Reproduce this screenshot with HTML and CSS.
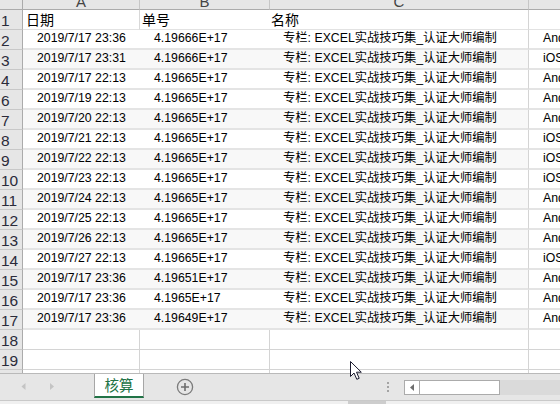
FILE: index.html
```html
<!DOCTYPE html>
<html lang="zh">
<head>
<meta charset="utf-8">
<link rel="stylesheet" href="styles.css">
</head>
<body>
<div class="app">
  <div class="sheet">
    <div class="row colhdr">
      <div class="rh corner"></div>
      <div class="ch"><span>A</span></div>
      <div class="ch"><span>B</span></div>
      <div class="ch"><span>C</span></div>
      <div class="ch last"></div>
    </div>
    <div class="row r1">
      <div class="rh"><span>1</span></div>
      <div class="c a">日期</div>
      <div class="c b">单号</div>
      <div class="c cc">名称</div>
      <div class="c d"></div>
    </div>
    <div class="row data"><div class="rh"><span>2</span></div><div class="c a">2019/7/17 23:36</div><div class="c b">4.19666E+17</div><div class="c cc">专栏: EXCEL实战技巧集_认证大师编制</div><div class="c d">Android</div></div>
    <div class="row data band"><div class="rh"><span>3</span></div><div class="c a">2019/7/17 23:31</div><div class="c b">4.19666E+17</div><div class="c cc">专栏: EXCEL实战技巧集_认证大师编制</div><div class="c d">iOS</div></div>
    <div class="row data"><div class="rh"><span>4</span></div><div class="c a">2019/7/17 22:13</div><div class="c b">4.19665E+17</div><div class="c cc">专栏: EXCEL实战技巧集_认证大师编制</div><div class="c d">Android</div></div>
    <div class="row data"><div class="rh"><span>6</span></div><div class="c a">2019/7/19 22:13</div><div class="c b">4.19665E+17</div><div class="c cc">专栏: EXCEL实战技巧集_认证大师编制</div><div class="c d">Android</div></div>
    <div class="row data band"><div class="rh"><span>7</span></div><div class="c a">2019/7/20 22:13</div><div class="c b">4.19665E+17</div><div class="c cc">专栏: EXCEL实战技巧集_认证大师编制</div><div class="c d">Android</div></div>
    <div class="row data"><div class="rh"><span>8</span></div><div class="c a">2019/7/21 22:13</div><div class="c b">4.19665E+17</div><div class="c cc">专栏: EXCEL实战技巧集_认证大师编制</div><div class="c d">iOS</div></div>
    <div class="row data band"><div class="rh"><span>9</span></div><div class="c a">2019/7/22 22:13</div><div class="c b">4.19665E+17</div><div class="c cc">专栏: EXCEL实战技巧集_认证大师编制</div><div class="c d">iOS</div></div>
    <div class="row data"><div class="rh"><span>10</span></div><div class="c a">2019/7/23 22:13</div><div class="c b">4.19665E+17</div><div class="c cc">专栏: EXCEL实战技巧集_认证大师编制</div><div class="c d">iOS</div></div>
    <div class="row data band"><div class="rh"><span>11</span></div><div class="c a">2019/7/24 22:13</div><div class="c b">4.19665E+17</div><div class="c cc">专栏: EXCEL实战技巧集_认证大师编制</div><div class="c d">Android</div></div>
    <div class="row data"><div class="rh"><span>12</span></div><div class="c a">2019/7/25 22:13</div><div class="c b">4.19665E+17</div><div class="c cc">专栏: EXCEL实战技巧集_认证大师编制</div><div class="c d">Android</div></div>
    <div class="row data band"><div class="rh"><span>13</span></div><div class="c a">2019/7/26 22:13</div><div class="c b">4.19665E+17</div><div class="c cc">专栏: EXCEL实战技巧集_认证大师编制</div><div class="c d">Android</div></div>
    <div class="row data"><div class="rh"><span>14</span></div><div class="c a">2019/7/27 22:13</div><div class="c b">4.19665E+17</div><div class="c cc">专栏: EXCEL实战技巧集_认证大师编制</div><div class="c d">iOS</div></div>
    <div class="row data band"><div class="rh"><span>15</span></div><div class="c a">2019/7/17 23:36</div><div class="c b">4.19651E+17</div><div class="c cc">专栏: EXCEL实战技巧集_认证大师编制</div><div class="c d">Android</div></div>
    <div class="row data"><div class="rh"><span>16</span></div><div class="c a">2019/7/17 23:36</div><div class="c b">4.1965E+17</div><div class="c cc">专栏: EXCEL实战技巧集_认证大师编制</div><div class="c d">Android</div></div>
    <div class="row data band"><div class="rh"><span>17</span></div><div class="c a">2019/7/17 23:36</div><div class="c b">4.19649E+17</div><div class="c cc">专栏: EXCEL实战技巧集_认证大师编制</div><div class="c d">Android</div></div>
    <div class="row empty"><div class="rh"><span>18</span></div><div class="c"></div><div class="c"></div><div class="c"></div><div class="c d"></div></div>
    <div class="row empty"><div class="rh"><span>19</span></div><div class="c"></div><div class="c"></div><div class="c"></div><div class="c d"></div></div>
    <div class="row empty"><div class="rh"><span>20</span></div><div class="c"></div><div class="c"></div><div class="c"></div><div class="c d"></div></div>
  </div>

  <div class="tabbar">
    <div class="tabs-row">
      <div class="nav">
        <svg width="94" height="26" viewBox="0 0 94 26">
          <polygon points="25.5,9 21.5,12.5 25.5,16" fill="#c4c4c4"/>
          <polygon points="50,9 54,12.5 50,16" fill="#c4c4c4"/>
        </svg>
      </div>
      <div class="tab">核算</div>
      <div class="add">
        <svg width="24" height="26" viewBox="0 0 24 26">
          <circle cx="12" cy="13" r="7.6" fill="none" stroke="#7b7b7b" stroke-width="1.3"/>
          <path d="M12 9v8M8 13h8" stroke="#6d6d6d" stroke-width="1.6"/>
        </svg>
      </div>
      <div class="spacer"></div>
      <div class="split">
        <svg width="16" height="26" viewBox="0 0 16 26">
          <rect x="7" y="8" width="2" height="2" fill="#a4a4a4"/>
          <rect x="7" y="12" width="2" height="2" fill="#a4a4a4"/>
          <rect x="7" y="16" width="2" height="2" fill="#a4a4a4"/>
        </svg>
      </div>
      <div class="hscroll">
        <div class="sbtn">
          <svg width="14" height="13" viewBox="0 0 14 13">
            <polygon points="9,3 5,6.5 9,10" fill="#6e6e6e"/>
          </svg>
        </div>
        <div class="thumb"></div>
        <div class="track"></div>
      </div>
    </div>
    <div class="status"><div class="status-thumb"></div></div>
  </div>

  <svg class="cursor" width="14" height="21" viewBox="0 0 14 21">
    <path d="M1.5 1.5 L1.5 16.5 L5 13 L7.8 19.3 L10.2 18.3 L7.5 12.2 L12.3 12.2 Z" fill="#fff" stroke="#1a1a2e" stroke-width="1" stroke-linejoin="round"/>
  </svg>
</div>
</body>
</html>
```

FILE: styles.css
```css
html, body {
  margin: 0;
  padding: 0;
  width: 560px;
  height: 404px;
  overflow: hidden;
  background: #fff;
}

.app {
  position: relative;
  width: 560px;
  height: 404px;
  display: flex;
  flex-direction: column;
  font-family: "Liberation Sans", "Noto Sans CJK SC", sans-serif;
  color: #000;
}

.sheet {
  height: 373px;
  overflow: hidden;
  flex: none;
}

.row {
  display: grid;
  grid-template-columns: 23px 117px 130px 259px 1fr;
  height: 20px;
}

.row > div {
  box-sizing: border-box;
  overflow: hidden;
  white-space: nowrap;
}

/* row headers */
.rh {
  background: #e6e6e6;
  border-right: 1px solid #ababab;
  border-bottom: 1px solid #c8c8c8;
  display: flex;
  align-items: flex-end;
  font-family: "Liberation Sans Narrow", "Liberation Sans", sans-serif;
  font-size: 15.5px;
  color: #2b2b3a;
  padding-left: 1px;
  padding-bottom: 1px;
}
.rh span {
  line-height: 15px;
}

/* column header */
.colhdr {
  height: 10px;
}
.colhdr .rh {
  border-bottom: 1px solid #ababab;
}
.ch {
  background: #e6e6e6;
  border-right: 1px solid #c6c6c6;
  border-bottom: 1px solid #ababab;
  display: flex;
  align-items: flex-end;
  justify-content: center;
  font-size: 15px;
  color: #444;
}
.ch.last {
  border-right: none;
}
.ch span {
  line-height: 15px;
}

/* header row 1 */
.r1 .c {
  font-family: "Noto Sans CJK SC", "Liberation Sans", sans-serif;
  font-size: 14px;
  line-height: 19px;
  border-bottom: 1px solid #e2e2e2;
}
.r1 .a {
  padding-left: 3px;
  border-right: 1px solid #d8d8d8;
}
.r1 .b {
  padding-left: 2px;
}
.r1 .cc {
  padding-left: 1px;
  border-right: 1px solid #d4d4d4;
}

/* data rows */
.data .c {
  font-size: 12.3px;
  line-height: 16px;
  border-bottom: 2px solid #e4e4e4;
  padding-left: 14px;
}
.data .cc {
  padding-left: 13px;
  border-right: 1px solid #d4d4d4;
}
.data.band .a,
.data.band .b,
.data.band .cc {
  background: #f8f8f8;
}

/* empty rows */
.empty .c {
  border-bottom: 1px solid #d4d4d4;
  border-right: 1px solid #d4d4d4;
}
.empty .c.d {
  border-right: none;
}

/* sheet tab bar */
.tabbar {
  flex: 1;
  background: #e6e6e6;
  border-top: 1px solid #b9b9b9;
  display: flex;
  flex-direction: column;
}
.tabs-row {
  height: 26px;
  display: flex;
  align-items: flex-start;
}
.nav {
  width: 94px;
  height: 26px;
}
.tab {
  box-sizing: border-box;
  width: 50px;
  height: 24px;
  background: #fff;
  border-left: 1px solid #a6a6a6;
  border-right: 1px solid #a6a6a6;
  border-bottom: 2px solid #217346;
  color: #217346;
  font-family: "Noto Sans CJK SC", sans-serif;
  font-size: 14.5px;
  line-height: 22px;
  text-align: center;
}
.add {
  margin-left: 29px;
  width: 24px;
  height: 26px;
}
.spacer {
  flex: 1;
}
.split {
  width: 16px;
  height: 26px;
  margin-right: 8px;
}
.hscroll {
  width: 156px;
  height: 15px;
  margin-top: 6px;
  display: flex;
}
.sbtn {
  box-sizing: border-box;
  width: 16px;
  height: 15px;
  background: #fff;
  border: 1px solid #ababab;
  display: flex;
}
.thumb {
  box-sizing: border-box;
  width: 80px;
  height: 15px;
  background: #fff;
  border: 1px solid #ababab;
  border-left: none;
}
.track {
  flex: 1;
  background: #dadada;
}
.status {
  flex: 1;
  border-top: 1px solid #c9c9c9;
  background: #f0f0f0;
  display: flex;
}
.status-thumb {
  margin-left: 348px;
  width: 38px;
  background: #cdcdcd;
}

/* mouse pointer overlay */
.cursor {
  position: absolute;
  left: 349px;
  top: 360px;
}
```
